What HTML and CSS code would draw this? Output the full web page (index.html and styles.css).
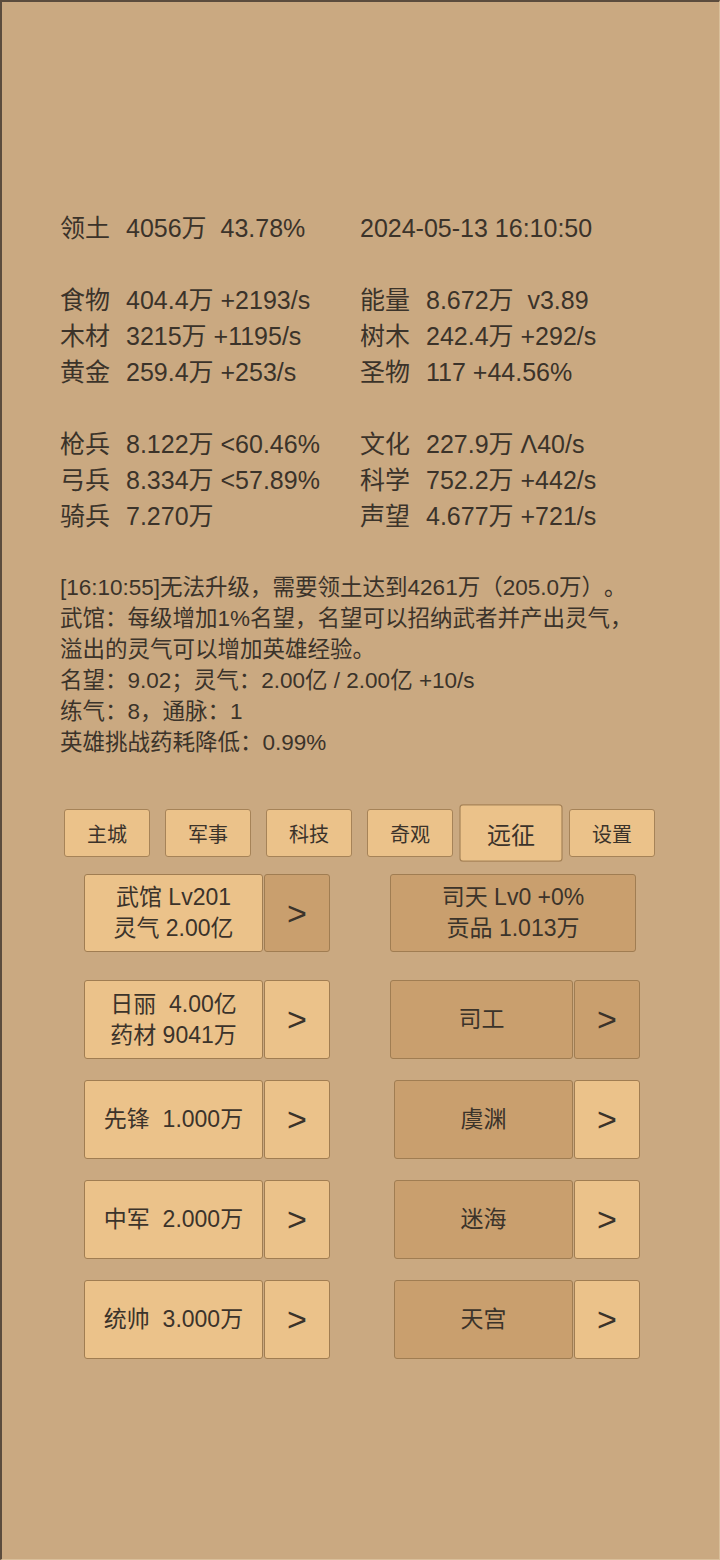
FILE: index.html
```html
<!DOCTYPE html>
<html lang="zh">
<head>
<meta charset="utf-8">
<title>远征</title>
<link rel="stylesheet" href="styles.css">
</head>
<body>
<div class="screen">
  <div class="stats">
    <div class="group">
      <div class="cell"><span class="lbl">领土</span><span class="val">4056万  43.78%</span></div>
      <div class="cell"><span class="val">2024-05-13 16:10:50</span></div>
    </div>
    <div class="group">
      <div class="cell"><span class="lbl">食物</span><span class="val">404.4万 +2193/s</span></div>
      <div class="cell"><span class="lbl">能量</span><span class="val">8.672万  v3.89</span></div>
      <div class="cell"><span class="lbl">木材</span><span class="val">3215万 +1195/s</span></div>
      <div class="cell"><span class="lbl">树木</span><span class="val">242.4万 +292/s</span></div>
      <div class="cell"><span class="lbl">黄金</span><span class="val">259.4万 +253/s</span></div>
      <div class="cell"><span class="lbl">圣物</span><span class="val">117 +44.56%</span></div>
    </div>
    <div class="group">
      <div class="cell"><span class="lbl">枪兵</span><span class="val">8.122万 &lt;60.46%</span></div>
      <div class="cell"><span class="lbl">文化</span><span class="val">227.9万 Λ40/s</span></div>
      <div class="cell"><span class="lbl">弓兵</span><span class="val">8.334万 &lt;57.89%</span></div>
      <div class="cell"><span class="lbl">科学</span><span class="val">752.2万 +442/s</span></div>
      <div class="cell"><span class="lbl">骑兵</span><span class="val">7.270万</span></div>
      <div class="cell"><span class="lbl">声望</span><span class="val">4.677万 +721/s</span></div>
    </div>
  </div>

  <div class="message">
    <p>[16:10:55]无法升级，需要领土达到4261万（205.0万）。</p>
    <p>武馆：每级增加1%名望，名望可以招纳武者并产出灵气，溢出的灵气可以增加英雄经验。</p>
    <p>名望：9.02；灵气：2.00亿 / 2.00亿 +10/s</p>
    <p>练气：8，通脉：1</p>
    <p>英雄挑战药耗降低：0.99%</p>
  </div>

  <div class="tabs">
    <div class="tab">主城</div>
    <div class="tab">军事</div>
    <div class="tab">科技</div>
    <div class="tab">奇观</div>
    <div class="tab active">远征</div>
    <div class="tab">设置</div>
  </div>

  <div class="rows">
    <div class="row first">
      <div class="pair">
        <div class="btn main light two"><span>武馆 Lv201</span><span>灵气 2.00亿</span></div>
        <div class="btn arrow dark">&gt;</div>
      </div>
      <div class="pair right-a">
        <div class="btn wide dark two"><span>司天 Lv0 +0%</span><span>贡品 1.013万</span></div>
      </div>
    </div>
    <div class="row">
      <div class="pair">
        <div class="btn main light two"><span>日丽&nbsp;&nbsp;4.00亿</span><span>药材 9041万</span></div>
        <div class="btn arrow light">&gt;</div>
      </div>
      <div class="pair right-a">
        <div class="btn main wider dark">司工</div>
        <div class="btn arrow dark">&gt;</div>
      </div>
    </div>
    <div class="row">
      <div class="pair">
        <div class="btn main light">先锋&nbsp;&nbsp;1.000万</div>
        <div class="btn arrow light">&gt;</div>
      </div>
      <div class="pair right-b">
        <div class="btn main dark">虞渊</div>
        <div class="btn arrow light">&gt;</div>
      </div>
    </div>
    <div class="row">
      <div class="pair">
        <div class="btn main light">中军&nbsp;&nbsp;2.000万</div>
        <div class="btn arrow light">&gt;</div>
      </div>
      <div class="pair right-b">
        <div class="btn main dark">迷海</div>
        <div class="btn arrow light">&gt;</div>
      </div>
    </div>
    <div class="row">
      <div class="pair">
        <div class="btn main light">统帅&nbsp;&nbsp;3.000万</div>
        <div class="btn arrow light">&gt;</div>
      </div>
      <div class="pair right-b">
        <div class="btn main dark">天宫</div>
        <div class="btn arrow light">&gt;</div>
      </div>
    </div>
  </div>
</div>
</body>
</html>
```

FILE: styles.css
```css
* { box-sizing: border-box; }
html, body { margin: 0; padding: 0; }
body {
  font-family: "Liberation Sans", "Noto Sans CJK SC", sans-serif;
  color: #3b332a;
  background: #caa981;
  text-spacing-trim: space-all;
}
.screen {
  width: 720px;
  height: 1560px;
  background: #caa981;
  border-top: 2px solid #5b4c3d;
  border-left: 2px solid #5b4c3d;
  border-right: 1px solid #d9bf9a;
  border-bottom: 1px solid #d9bf9a;
  overflow: hidden;
}
.stats {
  padding: 208px 0 0 58px;
  font-size: 25px;
  line-height: 36px;
}
.group {
  display: grid;
  grid-template-columns: 300px 300px;
  margin-bottom: 36px;
}
.cell { white-space: pre; }
.lbl { display: inline-block; width: 66px; }
.message {
  margin-top: 38px;
  padding-left: 58px;
  width: 644px;
  font-size: 22.5px;
  line-height: 31px;
}
.message p { margin: 0; }
.tabs {
  display: flex;
  gap: 15px;
  margin-top: 51px;
  padding-left: 62px;
}
.tab {
  width: 86px;
  height: 48px;
  display: flex;
  align-items: center;
  justify-content: center;
  font-size: 20px;
  background: #ebc28a;
  border: 1px solid #a68358;
  border-radius: 3px;
}
.tab.active { transform: scale(1.2); }
.rows {
  margin-top: 17px;
  padding-left: 82px;
}
.row {
  display: flex;
  height: 79px;
  margin-bottom: 21px;
}
.row.first { height: 78px; margin-bottom: 28px; }
.pair { display: flex; gap: 1px; }
.right-a { margin-left: 60px; }
.right-b { margin-left: 64px; }
.btn {
  height: 100%;
  display: flex;
  flex-direction: column;
  align-items: center;
  justify-content: center;
  border: 1px solid #a07d52;
  border-radius: 3px;
  font-size: 23px;
  line-height: 31px;
}
.btn.light { background: #ebc28a; }
.btn.dark { background: #c99f6e; }
.btn.main { width: 179px; }
.btn.main.wider { width: 183px; }
.btn.wide { width: 246px; }
.btn.arrow { width: 66px; font-size: 34px; }
```
